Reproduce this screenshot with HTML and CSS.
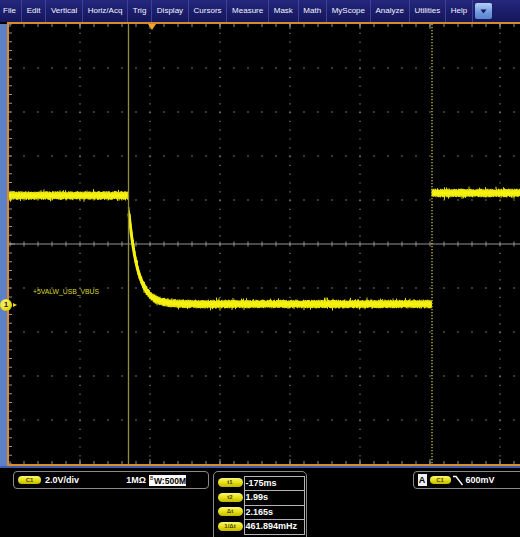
FILE: index.html
```html
<!DOCTYPE html>
<html>
<head>
<meta charset="utf-8">
<title>Scope</title>
<link rel="stylesheet" href="styles.css">
</head>
<body>
<div class="app">
  <nav class="menubar">
    <span class="mi first">File</span>
    <span class="mi">Edit</span>
    <span class="mi">Vertical</span>
    <span class="mi">Horiz/Acq</span>
    <span class="mi">Trig</span>
    <span class="mi">Display</span>
    <span class="mi">Cursors</span>
    <span class="mi">Measure</span>
    <span class="mi">Mask</span>
    <span class="mi">Math</span>
    <span class="mi">MyScope</span>
    <span class="mi">Analyze</span>
    <span class="mi">Utilities</span>
    <span class="mi">Help</span>
    <span class="dd"><svg width="7" height="5" viewBox="0 0 7 5"><path d="M0.5 0.5H6.5L3.5 4.5Z" fill="#16195e"/></svg></span>
  </nav>

  <div class="screen">
    <div class="side"></div>
    <div class="grat">
      <svg class="grid" viewBox="9 24 511 440" width="511" height="440">
        <g class="dots" fill="none">
          <path d="M80 24V464M150 24V464M220 24V464M290 24V464M360 24V464M500 24V464" stroke-dasharray="1.2 7.6"/>
          <path d="M9.4 68H520M9.4 112H520M9.4 156H520M9.4 200H520M9.4 288H520M9.4 332H520M9.4 376H520M9.4 420H520" stroke-dasharray="1.2 12.8"/>
        </g>
        <g class="ticks" fill="none">
          <path d="M9 244H520" stroke-width="1"/>
          <path d="M9.5 244H520" stroke-width="5" stroke-dasharray="1 13"/>
          <path d="M9.5 25.5H520M9.5 462.5H520" stroke-width="3" stroke-dasharray="1 13"/>
          <path d="M10.5 23.6V464" stroke-width="3" stroke-dasharray="1 7.8"/>
          <path d="M80 24v5M150 24v5M220 24v5M290 24v5M360 24v5M430 24v5M500 24v5M80 464v-5M150 464v-5M220 464v-5M290 464v-5M360 464v-5M430 464v-5M500 464v-5M9 244h6" stroke-width="1"/>
        </g>
        <path id="tracecore" class="tracecore" d=""/>
        <path id="trace" class="trace" d=""/>
        <line class="cur1" x1="128.5" y1="24" x2="128.5" y2="464"/>
        <line class="cur2" x1="432" y1="24" x2="432" y2="464"/>
        <path class="trig" d="M148 24H156L152 30Z"/>
      </svg>
      <div class="chlabel">+5VALW_USB_VBUS</div>
    </div>
    <div class="chmark">1</div>
  </div>

  <div class="panel">
    <div class="vbox">
      <span class="pill">C1</span>
      <span class="txt scale">2.0V/div</span>
      <span class="txt imp">1MΩ</span>
      <span class="bw"><span class="bwb">B</span>W:500M</span>
    </div>
    <div class="cbox">
      <div class="crow"><span class="pill cp">t1</span><span class="cval">-175ms</span></div>
      <div class="crow"><span class="pill cp">t2</span><span class="cval">1.99s</span></div>
      <div class="crow"><span class="pill cp">Δt</span><span class="cval">2.165s</span></div>
      <div class="crow"><span class="pill cp">1/Δt</span><span class="cval">461.894mHz</span></div>
    </div>
    <div class="tbox">
      <span class="abox">A</span>
      <span class="pill tp">C1</span>
      <svg class="edge" width="11" height="11" viewBox="0 0 11 11"><path d="M0 1.5H3L9.5 10" fill="none" stroke="#ffffff" stroke-width="1.4"/></svg>
      <span class="txt">600mV</span>
    </div>
  </div>
</div>
<script src="script.js"></script>
</body>
</html>
```

FILE: styles.css
```css
html, body {
  margin: 0;
  padding: 0;
  background: #000;
}
body {
  width: 520px;
  height: 537px;
  overflow: hidden;
  font-family: "Liberation Sans", Arial, sans-serif;
}
.app {
  width: 520px;
  height: 537px;
  display: flex;
  flex-direction: column;
}

/* Menu bar */
.menubar {
  height: 22px;
  flex: none;
  display: flex;
  align-items: stretch;
  background: linear-gradient(#25287d, #1a1c68 60%, #15175c);
}
.mi {
  flex: none;
  font-size: 8px;
  line-height: 22px;
  color: #f4f4fc;
  padding: 0 4.75px;
  border-right: 1px solid #3d4296;
  white-space: nowrap;
}
.mi.first {
  padding-left: 3px;
  padding-right: 5px;
}
.dd {
  flex: none;
  width: 17px;
  height: 16px;
  margin: 3px 0 0 2px;
  border-radius: 2px;
  background: linear-gradient(#b4d0f6, #6f98dc 60%, #5a84cc);
  display: flex;
  align-items: center;
  justify-content: center;
}

/* Scope screen */
.screen {
  height: 444px;
  flex: none;
  display: flex;
  position: relative;
  border-bottom: 2px solid #3b5cb0;
}
.side {
  flex: none;
  width: 7px;
  margin-top: 2px;
  background: #5b80c8;
}
.grat {
  flex: 1;
  position: relative;
  border-top: 2px solid #d98c2c;
  border-left: 2px solid #d98c2c;
  border-bottom: 2px solid #d98c2c;
  background: #000;
}
.grid {
  display: block;
}
.dots path {
  stroke: #7c7c7c;
  stroke-width: 1.3;
}
.ticks path {
  stroke: #929292;
}
.tracecore {
  fill: none;
  stroke: #f6f210;
  stroke-width: 3;
  stroke-linejoin: round;
}
.trace {
  fill: none;
  stroke: #f6f210;
  stroke-width: 0.9;
}
.cur1 {
  stroke: #8f8c4a;
  stroke-width: 1.3;
}
.cur2 {
  stroke: #cdc43c;
  stroke-width: 1.3;
  stroke-dasharray: 1.3 1.7;
}
.trig {
  fill: #f0a424;
}
.chlabel {
  position: absolute;
  left: 24px;
  top: 264px;
  font-size: 6.8px;
  line-height: 8px;
  color: #dcd834;
  white-space: nowrap;
}
.chmark {
  position: absolute;
  left: 0;
  top: 277px;
  width: 12px;
  height: 12px;
  border-radius: 50%;
  background: radial-gradient(circle at 40% 35%, #fff680, #e8dc10 60%, #b8a800);
  color: #222;
  font-size: 8px;
  font-weight: bold;
  line-height: 12px;
  text-align: center;
}
.chmark::after {
  content: "";
  position: absolute;
  left: 13px;
  top: 3.5px;
  border-left: 4px solid #e8dc20;
  border-top: 2.5px solid transparent;
  border-bottom: 2.5px solid transparent;
}

/* Bottom readout panel */
.panel {
  flex: 1;
  display: flex;
  align-items: flex-start;
  padding-top: 3px;
  background: #000;
}
.pill {
  flex: none;
  width: 23px;
  height: 8px;
  border-radius: 5px;
  background: linear-gradient(#fbf67c, #e8e014 50%, #c2b800);
  color: #4a4400;
  font-size: 6px;
  font-weight: bold;
  line-height: 8px;
  text-align: center;
}
.txt {
  color: #fff;
  font-size: 9px;
  font-weight: bold;
  white-space: nowrap;
}
.vbox {
  flex: none;
  box-sizing: border-box;
  margin-left: 13px;
  width: 196px;
  height: 18px;
  border: 1.5px solid #8a8a8a;
  border-radius: 4px;
  display: flex;
  align-items: center;
  padding-left: 4px;
}
.scale {
  margin-left: 4px;
}
.imp {
  margin-left: auto;
}
.bw {
  flex: none;
  position: relative;
  margin-left: 3px;
  margin-right: 22px;
  width: 37px;
  height: 11px;
  box-sizing: border-box;
  background: #fff;
  color: #000;
  font-size: 8.5px;
  font-weight: bold;
  line-height: 12px;
  padding-left: 5px;
  white-space: nowrap;
}
.bwb {
  position: absolute;
  left: 1px;
  top: -3px;
  font-size: 5px;
  font-weight: normal;
}
.cbox {
  flex: none;
  box-sizing: border-box;
  margin-left: 4px;
  width: 94px;
  height: 80px;
  border: 1.5px solid #8a8a8a;
  border-radius: 5px;
  padding-top: 3.5px;
  display: flex;
  flex-direction: column;
}
.crow {
  flex: none;
  height: 14.5px;
  display: flex;
  align-items: center;
}
.cp {
  width: 25px;
  height: 9px;
  line-height: 9px;
  margin-left: 3.5px;
}
.cval {
  flex: none;
  box-sizing: border-box;
  margin-left: 1px;
  width: 61px;
  height: 15.5px;
  margin-bottom: -1px;
  border: 1px solid #b4b4b4;
  color: #fff;
  font-size: 9px;
  font-weight: bold;
  line-height: 13.5px;
  padding-left: 1px;
  white-space: nowrap;
}
.tbox {
  flex: none;
  box-sizing: border-box;
  margin-left: 106px;
  width: 130px;
  height: 18px;
  border: 1.5px solid #8a8a8a;
  border-radius: 4px;
  display: flex;
  align-items: center;
  padding-left: 3.5px;
}
.abox {
  flex: none;
  width: 9px;
  height: 12px;
  background: #f0f0f0;
  color: #000;
  font-size: 9px;
  font-weight: bold;
  line-height: 12px;
  text-align: center;
}
.tp {
  width: 21px;
  margin-left: 3px;
}
.edge {
  flex: none;
  margin-left: 2px;
  margin-right: 2px;
}
```

FILE: script.js
```js
(function () {
  var path = document.getElementById('trace');
  var core = document.getElementById('tracecore');
  var seed = 987654321;
  function rnd() {
    seed = (seed * 1103515245 + 12345) % 2147483648;
    return seed / 2147483648;
  }
  function level(x) {
    if (x < 129) return 195.5;
    if (x < 432) return 304 - 90.5 * Math.exp(-(x - 129) / 9);
    return 193;
  }
  var d = '';
  var prev = null;
  for (var x = 9; x <= 520; x += 0.5) {
    var y = level(x);
    var yp = (prev === null || x === 129 || x === 432) ? y : prev;
    var lo = Math.min(y, yp);
    var hi = Math.max(y, yp);
    var a = 2.8 + rnd() * 1.6;
    var b = 2.8 + rnd() * 1.6;
    if (rnd() < 0.08) a += rnd() * 2.5;
    if (rnd() < 0.08) b += rnd() * 2.5;
    d += 'M' + x + ' ' + (lo - a).toFixed(1) + 'V' + (hi + b).toFixed(1);
    prev = y;
  }
  path.setAttribute('d', d);

  var c = 'M9 195.5H128.5M129 ' + level(129).toFixed(1);
  for (var x2 = 129.5; x2 < 432; x2 += 0.5) {
    c += 'L' + x2 + ' ' + level(x2).toFixed(2);
  }
  c += 'M432 193H520';
  core.setAttribute('d', c);
})();
```
